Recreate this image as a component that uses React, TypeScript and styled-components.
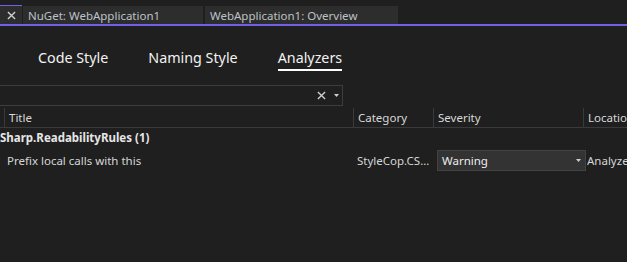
import { FC } from 'react'
import styled, { createGlobalStyle } from 'styled-components'

const GlobalStyle = createGlobalStyle`
  html, body {
    margin: 0;
    padding: 0;
    background: #1f1f1f;
    overflow: hidden;
  }
  body {
    font-family: 'Segoe UI', 'Noto Sans', sans-serif;
    color: #d6d6d6;
  }
`

const Page = styled.div`
  width: 627px;
  height: 262px;
  background: #1f1f1f;
  display: flex;
  flex-direction: column;
  overflow: hidden;
`

const TabStrip = styled.div`
  height: 24px;
  display: flex;
  align-items: flex-end;
  gap: 1px;
`

const Tab = styled.div<{ $width: number; $active?: boolean }>`
  box-sizing: border-box;
  width: ${(p) => p.$width}px;
  height: ${(p) => (p.$active ? 19 : 18)}px;
  background: #2d2d2d;
  border-top: ${(p) => (p.$active ? '1px solid #7160e8' : 'none')};
  display: flex;
  align-items: center;
  justify-content: ${(p) => (p.$active ? 'center' : 'flex-start')};
  padding: 0 ${(p) => (p.$active ? 0 : 5)}px;
  font-size: 11.5px;
  color: #bcc2c8;
  white-space: nowrap;
  margin-right: ${(p) => (p.$active ? 0 : 1)}px;
`

const AccentBar = styled.div`
  height: 2px;
  background: #7160e8;
`

const SubTabs = styled.div`
  display: flex;
  gap: 40px;
  padding: 23px 0 0 38px;
  height: 48px;
  box-sizing: border-box;
`

const SubTab = styled.div<{ $active?: boolean }>`
  font-size: 14.3px;
  color: #f2f2f2;
  height: 20px;
  line-height: 18px;
  border-bottom: 2px solid ${(p) => (p.$active ? '#ffffff' : 'transparent')};
`

const SearchBox = styled.div`
  margin-top: 11px;
  width: 343px;
  height: 21px;
  box-sizing: border-box;
  border: 1px solid #3d3d3d;
  border-left: none;
  display: flex;
  align-items: center;
  justify-content: flex-end;
  gap: 8px;
  padding-right: 3px;
`

const IconButton = styled.div`
  display: flex;
  align-items: center;
  color: #cfcfcf;
`

const Grid = styled.div`
  margin-top: 2px;
  display: flex;
  flex-direction: column;
  font-size: 11.5px;
`

const HeaderRow = styled.div`
  display: grid;
  grid-template-columns: 4px 349px 80px 150px 1fr;
  height: 19px;
  border-bottom: 1px solid #3a3a3a;
`

const HeaderCell = styled.div`
  border-left: 1px solid #3a3a3a;
  padding-left: 4px;
  color: #d8d8d8;
  line-height: 19px;
  white-space: nowrap;
  overflow: hidden;
`

const Spacer = styled.div``

const GroupRow = styled.div`
  height: 21px;
  line-height: 20px;
  font-weight: bold;
  color: #e6e6e6;
  white-space: nowrap;
`

const DataRow = styled.div`
  display: grid;
  grid-template-columns: 357px 80px 150px 1fr;
  height: 22px;
  align-items: center;
  color: #d6d6d6;
  white-space: nowrap;
`

const Cell = styled.div<{ $indent?: number }>`
  padding-left: ${(p) => p.$indent ?? 0}px;
  overflow: hidden;
`

const SeverityBox = styled.div`
  box-sizing: border-box;
  width: 149px;
  height: 21px;
  background: #333333;
  border: 1px solid #434343;
  display: flex;
  align-items: center;
  justify-content: space-between;
  padding: 0 4px;
  color: #ececec;
`

const CloseIcon: FC<{ size: number; color?: string }> = ({ size, color = '#cfcfcf' }) => (
  <svg width={size} height={size} viewBox="0 0 10 10">
    <path d="M1 1 L9 9 M9 1 L1 9" stroke={color} strokeWidth="1.5" />
  </svg>
)

const Caret: FC = () => (
  <svg width="5" height="3" viewBox="0 0 5 3">
    <path d="M0 0 H5 L2.5 3 Z" fill="#cfcfcf" />
  </svg>
)

const App: FC = () => {
  return (
    <Page>
      <GlobalStyle />
      <TabStrip>
        <Tab $width={22} $active>
          <CloseIcon size={9} color="#d0d0d0" />
        </Tab>
        <Tab $width={180}>NuGet: WebApplication1</Tab>
        <Tab $width={193}>WebApplication1: Overview</Tab>
      </TabStrip>
      <AccentBar />
      <SubTabs>
        <SubTab>Code Style</SubTab>
        <SubTab>Naming Style</SubTab>
        <SubTab $active>Analyzers</SubTab>
      </SubTabs>
      <SearchBox>
        <IconButton>
          <CloseIcon size={9} />
        </IconButton>
        <IconButton>
          <Caret />
        </IconButton>
      </SearchBox>
      <Grid>
        <HeaderRow>
          <Spacer />
          <HeaderCell>Title</HeaderCell>
          <HeaderCell>Category</HeaderCell>
          <HeaderCell>Severity</HeaderCell>
          <HeaderCell>Location</HeaderCell>
        </HeaderRow>
        <GroupRow>Sharp.ReadabilityRules (1)</GroupRow>
        <DataRow>
          <Cell $indent={7}>Prefix local calls with this</Cell>
          <Cell>StyleCop.CS...</Cell>
          <Cell>
            <SeverityBox>
              <span>Warning</span>
              <Caret />
            </SeverityBox>
          </Cell>
          <Cell>Analyzer</Cell>
        </DataRow>
      </Grid>
    </Page>
  )
}

export default App
